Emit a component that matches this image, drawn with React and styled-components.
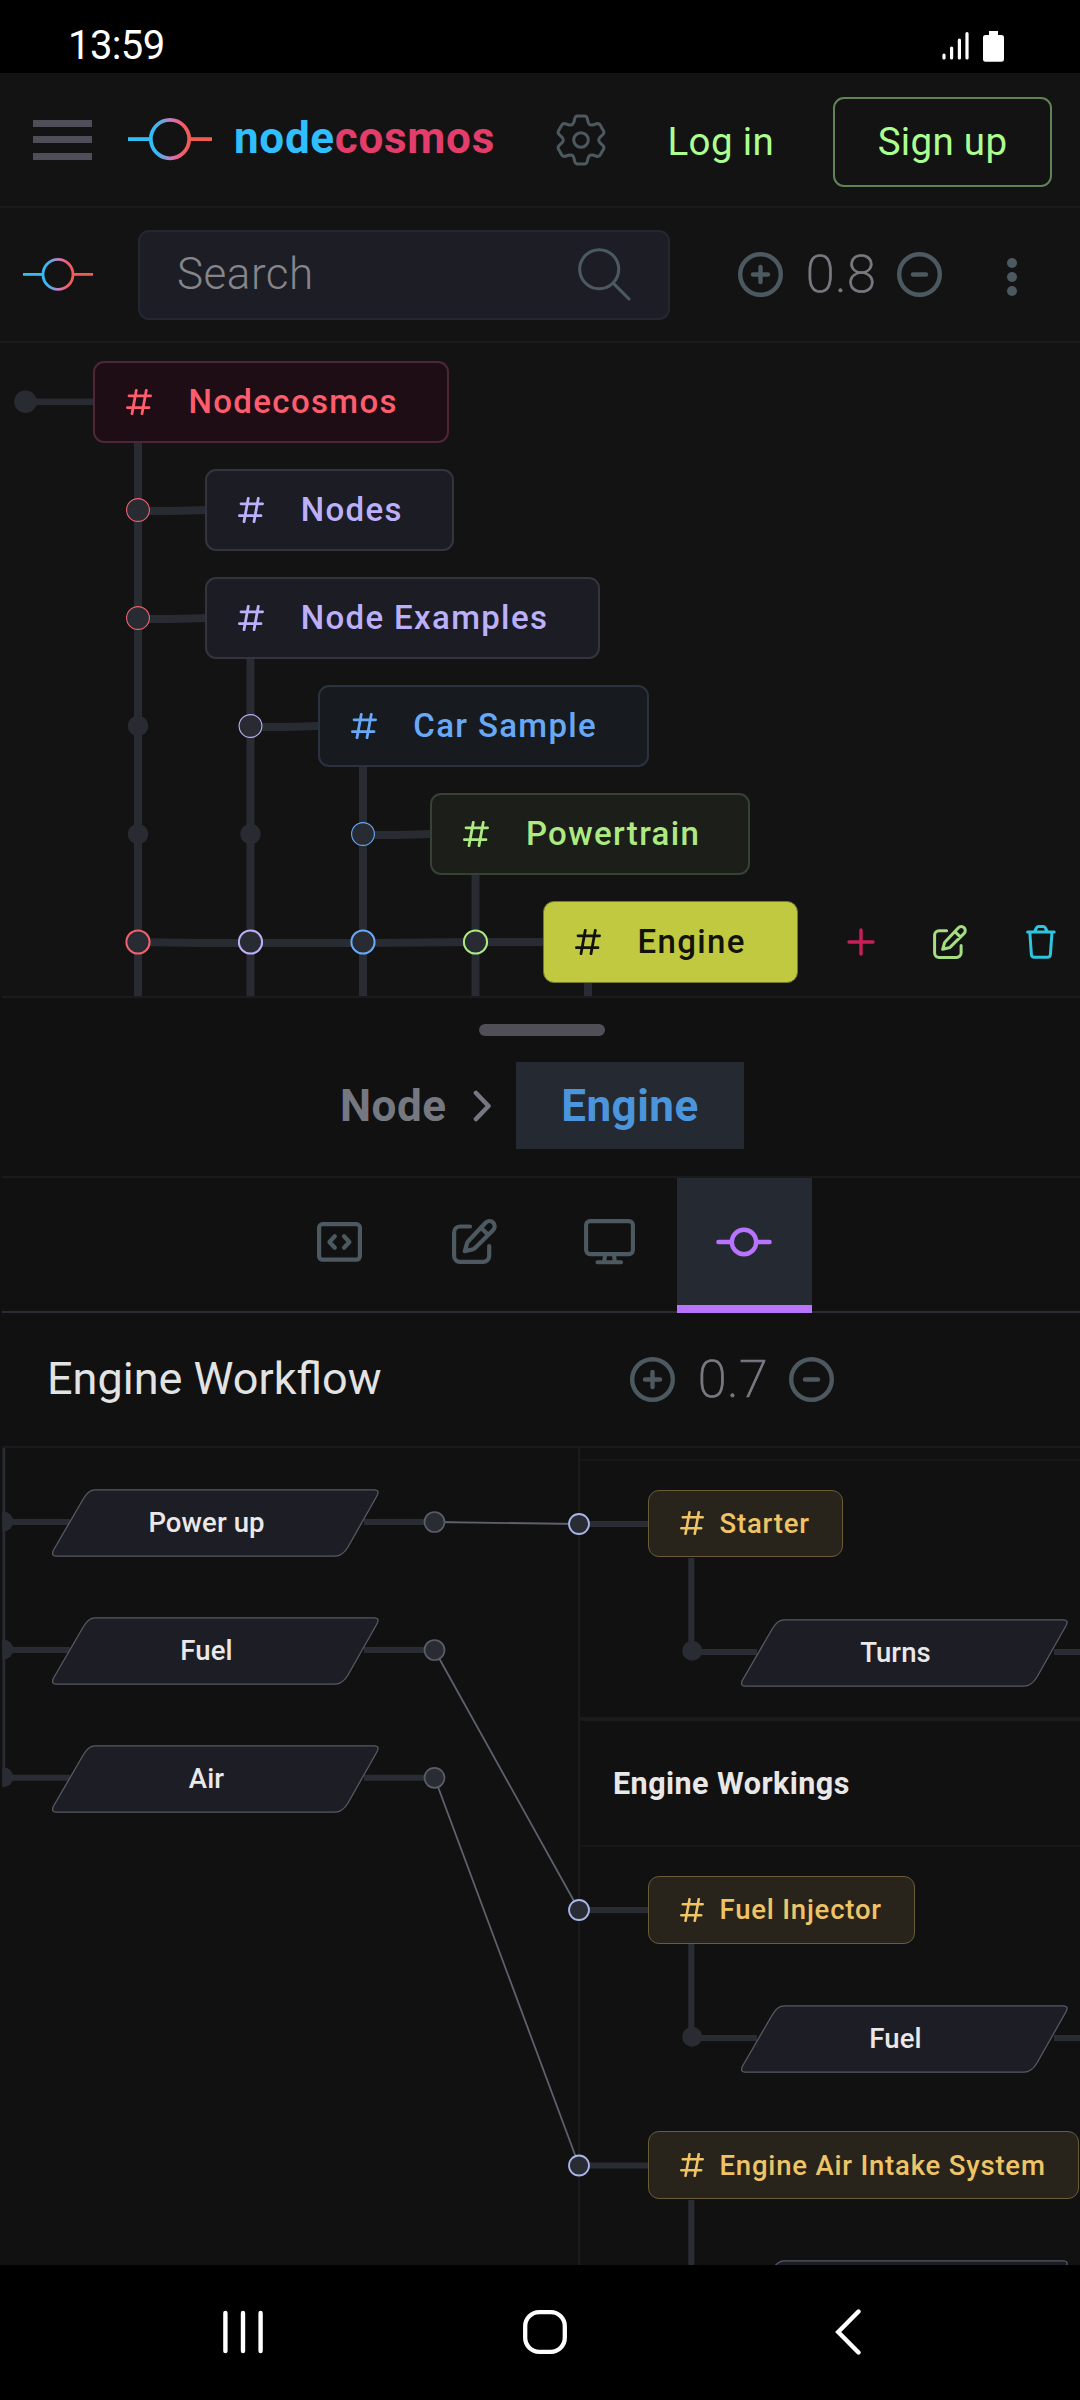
import React from "react";
import styled, { createGlobalStyle } from "styled-components";

const GlobalStyle = createGlobalStyle`
  * { box-sizing: border-box; }
  body { margin: 0; background: #000; }
`;

const line = "#1b1b1c";
const link = "#282b31";
const muted = "#4d5960";

const Screen = styled.div`
  width: 1080px;
  height: 2400px;
  display: flex;
  flex-direction: column;
  overflow: hidden;
  background: #131313;
  font-family: Roboto, "Liberation Sans", sans-serif;
  svg { display: block; flex: none; }
`;

const StatusBar = styled.div`
  height: 73px;
  flex: none;
  padding: 19px 76px 0 68px;
  display: flex;
  justify-content: space-between;
  background: #000;
`;

const Clock = styled.div`
  color: #fff;
  font-size: 40px;
  line-height: 53px;
  letter-spacing: -0.6px;
`;

const StatusIcons = styled.div`
  display: flex;
  gap: 14px;
  padding-top: 12px;
`;

const Header = styled.header`
  height: 135px;
  flex: none;
  display: flex;
  align-items: center;
  padding: 0 28px 0 33px;
  border-bottom: 2px solid ${line};
  > * { flex: none; }
`;

const MenuButton = styled.div`
  width: 59px;
  height: 40px;
  margin-right: 36px;
  display: flex;
  flex-direction: column;
  justify-content: space-between;
`;

const MenuBar = styled.span`
  height: 7px;
  background: #4f4e58;
`;

const Brand = styled.div`
  width: 321px;
  margin-left: 22px;
  padding-bottom: 4px;
  color: #2fbfff;
  font-size: 44px;
  font-weight: 700;
  line-height: 52px;
  letter-spacing: 0.7px;
  span { color: #e23d6b; }
`;

const LoginLink = styled.div`
  margin: 3px 0 0 59px;
  width: 167px;
  padding-left: 1.5px;
  color: #abff91;
  font-size: 38.5px;
  letter-spacing: 0.35px;
`;

const SignUp = styled.div`
  margin-top: 5px;
  width: 219px;
  height: 90px;
  padding-bottom: 2px;
  display: flex;
  align-items: center;
  justify-content: center;
  border: 2px solid #5f8355;
  border-radius: 11px;
  color: #abff91;
  font-size: 38.5px;
  letter-spacing: 0.3px;
`;

const Toolbar = styled.div`
  height: 135px;
  flex: none;
  display: flex;
  align-items: center;
  padding-left: 23px;
  border-bottom: 2px solid ${line};
`;

const SearchBox = styled.div`
  width: 532px;
  height: 90px;
  margin: 0 68px 0 45px;
  padding: 0 37px 0 37px;
  display: flex;
  align-items: center;
  justify-content: space-between;
  background: #1d1d25;
  border: 2px solid #24272f;
  border-radius: 11px;
`;

const Placeholder = styled.span`
  color: #85858a;
  font-size: 44px;
  font-weight: 300;
  line-height: 52px;
  letter-spacing: 0.5px;
  padding-bottom: 2px;
`;

const Zoom = styled.div`
  display: flex;
  align-items: center;
`;

const ZoomValue = styled.span`
  width: 114px;
  padding-left: 2px;
  text-align: center;
  color: #797a82;
  font-size: 52.25px;
  font-weight: 200;
  -webkit-text-stroke: 0.7px #797a82;
  line-height: 60px;
  letter-spacing: 0.4px;
`;

const More = styled.div`
  margin-left: 65px;
  padding-top: 4px;
  display: flex;
  flex-direction: column;
  gap: 4px;
  i { width: 10px; height: 10px; border-radius: 50%; background: ${muted}; }
`;

const Tree = styled.div`
  position: relative;
  height: 653px;
  flex: none;
  padding: 18px 0 0 93px;
  display: flex;
  flex-direction: column;
  gap: 26px;
  overflow: hidden;
`;

const Links = styled.svg`
  position: absolute;
  left: 0;
  top: 0;
`;

const TreeRow = styled.div`
  position: relative;
  display: flex;
  align-items: center;
  margin-left: ${(p) => Math.max(0, p.$depth * 112.6 - 0.4)}px;
`;

const tones = {
  red: ["#ff5d6e", "#1f0d15", "#4d2638"],
  violet: ["#bdb0fb", "#1c1c24", "#34343f"],
  blue: ["#68a9f7", "#171b1f", "#2a3240"],
  green: ["#aeea82", "#1b1e19", "#354334"],
  lime: ["#11120a", "#c1c940", "#75782d"],
};

const TreeNode = styled.div`
  width: ${(p) => p.$width}px;
  height: 82px;
  padding: 0 0 1px 31px;
  display: flex;
  align-items: center;
  gap: 36.5px;
  color: ${(p) => tones[p.$tone][0]};
  background: ${(p) => tones[p.$tone][1]};
  border: ${(p) => (p.$tone === "lime" ? 1.5 : 2)}px solid ${(p) => tones[p.$tone][2]};
  border-radius: 11px;
  font-size: 33px;
  font-weight: 500;
  letter-spacing: 1.35px;
  white-space: nowrap;
`;

const NodeActions = styled.div`
  display: flex;
  align-items: center;
  margin-left: 49px;
  gap: 58.5px;
`;

const Panel = styled.section`
  height: 1269px;
  flex: none;
  display: flex;
  flex-direction: column;
  background: #111;
`;

const Crumbs = styled.div`
  height: 182px;
  flex: none;
  margin-left: 2px;
  padding: 26px 0 0 2px;
  display: flex;
  flex-direction: column;
  align-items: center;
  gap: 26px;
  border-top: 2px solid ${line};
  border-bottom: 2px solid ${line};
`;

const Handle = styled.div`
  width: 126px;
  height: 12px;
  border-radius: 6px;
  background: #504e57;
`;

const CrumbRow = styled.div`
  display: flex;
  align-items: center;
  color: #767881;
  font-size: 44px;
  font-weight: 700;
  letter-spacing: 0.5px;
  svg { margin: 0 23.5px 0 26px; }
`;

const CrumbActive = styled.div`
  width: 228px;
  height: 87px;
  display: flex;
  align-items: center;
  justify-content: center;
  background: #252932;
  color: #4a95dc;
`;

const Tabs = styled.div`
  height: 135px;
  flex: none;
  margin-left: 2px;
  padding-left: 270px;
  display: flex;
  background: linear-gradient(#2a2b33, #2a2b33) bottom / 100% 2px no-repeat;
`;

const Tab = styled.div`
  width: 135px;
  height: 135px;
  display: flex;
  align-items: center;
  justify-content: center;
  padding: ${(p) => (p.$active ? "1px 1px 0 0" : "0 0 8px")};
  background: ${(p) => (p.$active ? "#252932" : "transparent")};
  border-bottom: ${(p) => (p.$active ? "8px solid #b874ff" : "none")};
`;

const WorkflowBar = styled.div`
  height: 135px;
  flex: none;
  margin-left: 2px;
  padding-left: 45px;
  display: flex;
  align-items: center;
  border-bottom: 2px solid ${line};
`;

const WorkflowTitle = styled.h1`
  margin: 0;
  width: 583px;
  padding-bottom: 2px;
  color: #e3e3e3;
  font-size: 45px;
  font-weight: 400;
  font-variant-ligatures: common-ligatures;
`;

const Canvas = styled.div`
  position: relative;
  height: 817px;
  flex: none;
  display: flex;
  overflow: hidden;
`;

const Inputs = styled.div`
  width: 578px;
  flex: none;
`;

const Steps = styled.div`
  flex: 1;
  display: flex;
  flex-direction: column;
  border-left: 2px solid ${line};
`;

const StepPrevious = styled.div`
  height: 273px;
  flex: none;
  padding-top: 11px;
  border-bottom: 4px solid ${line};
  &::before { content: ""; display: block; height: 2px; background: #171718; }
`;

const StepHeader = styled.h2`
  height: 126px;
  flex: none;
  margin: 0;
  padding: 0 0 0 33px;
  display: flex;
  align-items: center;
  border-bottom: 2px solid #171718;
  color: #eae7e7;
  font-size: 30.5px;
  font-weight: 700;
  letter-spacing: 0.45px;
`;

const FlowNode = styled.div`
  position: absolute;
  left: 648px;
  top: ${(p) => p.$y}px;
  width: ${(p) => p.$width}px;
  height: 67.5px;
  padding-left: 31px;
  display: flex;
  align-items: center;
  gap: 15.5px;
  color: #efc467;
  background: #28241b;
  border: 1.5px solid #6b5c37;
  border-radius: 11px;
  font-size: 27.5px;
  font-weight: 500;
  letter-spacing: 0.8px;
  white-space: nowrap;
`;

const IoNode = styled.div`
  position: absolute;
  left: ${(p) => p.$x}px;
  top: ${(p) => p.$y}px;
  width: 328px;
  height: 68px;
  svg { position: absolute; left: 0; top: 0; }
  span {
    position: relative;
    display: block;
    width: 309px;
    text-align: center;
    line-height: 67px;
    color: #ebe8e8;
    font-size: 27.5px;
    font-weight: 500;
    letter-spacing: 0.1px;
  }
`;

const NavBar = styled.nav`
  height: 135px;
  flex: none;
  display: flex;
  align-items: center;
  padding: 0 0 2px 223px;
  background: #000;
`;

const NavSlot = styled.div`
  width: ${(p) => p.$width}px;
`;

const Logo = ({ width, r, stroke, id }) => {
  const c = width / 2;
  const h = r * 2 + stroke + 2;
  return (
    <svg width={width} height={h} viewBox={`0 0 ${width} ${h}`} fill="none" stroke={`url(#${id})`} strokeWidth={stroke}>
      <defs>
        <linearGradient id={id} gradientUnits="userSpaceOnUse" x1={c - r} x2={c + r} y1="0" y2="0">
          <stop offset="0" stopColor="#33bdf5" />
          <stop offset="0.2" stopColor="#45b4ee" />
          <stop offset="0.55" stopColor="#d277b8" />
          <stop offset="0.75" stopColor="#f0607c" />
          <stop offset="1" stopColor="#f25b52" />
        </linearGradient>
      </defs>
      <circle cx={c} cy={h / 2} r={r} />
      <path d={`M0 ${h / 2}H${c - r}`} stroke="#33bdf5" />
      <path d={`M${c + r} ${h / 2}H${width}`} stroke="#f25b52" />
    </svg>
  );
};

const gearTooth = [
  ["L", -7.2, -17.6], ["L", -6.2, -21.7], ["Q", -5.5, -24.1, -3.4, -24.1], ["L", 3.4, -24.1],
  ["Q", 5.5, -24.1, 6.2, -21.7], ["L", 7.2, -17.6], ["Q", 7.8, -15.8, 9, -15.2],
];
const gearPath = "M-9 -15.2" + [0, 60, 120, 180, 240, 300].map((a) => {
  const t = (a * Math.PI) / 180;
  return gearTooth.map(([cmd, ...n]) => {
    const out = [];
    for (let i = 0; i < n.length; i += 2) {
      out.push((n[i] * Math.cos(t) - n[i + 1] * Math.sin(t)).toFixed(2));
      out.push((n[i] * Math.sin(t) + n[i + 1] * Math.cos(t)).toFixed(2));
    }
    return cmd + out.join(" ");
  }).join("");
}).join("") + "Z";

const Gear = () => (
  <svg width="52" height="52" viewBox="-26 -26 52 52" fill="none" stroke={muted} strokeWidth="3" strokeLinejoin="round">
    <path d={gearPath} />
    <circle r="7.3" />
  </svg>
);

const SearchIcon = () => (
  <svg width="53" height="53" viewBox="0 0 53 53" fill="none" stroke={muted} strokeWidth="3.1" strokeLinecap="round">
    <circle cx="21.2" cy="21.2" r="19.5" />
    <path d="M35.2 35.2L51 51" />
  </svg>
);

const ZoomIcon = ({ plus }) => (
  <svg width="45" height="45" viewBox="0 0 45 45" fill="none" stroke={muted} strokeWidth="4.4" strokeLinecap="round">
    <circle cx="22.5" cy="22.5" r="20.3" />
    {plus ? <path d="M15 22.5H30M22.5 15V30" /> : <path d="M16 22.5H29" />}
  </svg>
);

const Hash = ({ size = 26 }) => (
  <svg width={size} height={size} viewBox="0 0 26 26" fill="none" stroke="currentColor" strokeWidth="2.8" strokeLinecap="round">
    <path d="M10.3 1.3L6 24.7M20.3 1.3L16 24.7M3 6.8H24.6M1.4 18.7H23" />
  </svg>
);

const Pencil = ({ size, color, stroke = 4.2 }) => (
  <svg width={size} height={size} viewBox="0 0 45 45" fill="none" stroke={color} strokeWidth={stroke} strokeLinecap="round" strokeLinejoin="round">
    <path d="M18 7.5H8A6 6 0 0 0 2.1 13.5V37A6 6 0 0 0 8 42.9H31A6 6 0 0 0 37.2 37V27" />
    <path d="M12.8 32.2L15.2 23.8Q15.5 22.9 16.2 22.2L33.6 3.7A5 5 0 0 1 41.2 11L22.8 29.2Q22 29.9 21 30.2ZM29 8.8L36.1 15.8" />
  </svg>
);

const Plus = () => (
  <svg width="28" height="28" viewBox="0 0 28 28" stroke="#c81f5b" strokeWidth="3.4" strokeLinecap="round">
    <path d="M2 14H26M14 2V26" />
  </svg>
);

const Trash = () => (
  <svg width="30" height="34" viewBox="0 0 30 34" fill="none" stroke="#2ec5de" strokeWidth="3" strokeLinecap="round" strokeLinejoin="round">
    <path d="M1.6 7H28.2M8.6 6.5L10.4 3Q11.2 1.6 12.6 1.6H17.2Q18.6 1.6 19.4 3L21.2 6.5M3.8 7L5.4 29.6Q5.7 32.3 8.4 32.3H21.4Q24.1 32.3 24.4 29.6L26 7" />
  </svg>
);

const CodeIcon = () => (
  <svg width="45" height="40" viewBox="0 0 45 40" fill="none" stroke={muted} strokeWidth="4.2" strokeLinecap="round" strokeLinejoin="round">
    <rect x="2.1" y="2.1" width="40.8" height="35.6" rx="3.5" />
    <path d="M17.8 14.2L12.4 20L17.8 25.7M27 14.2L32.4 20L27 25.7" />
  </svg>
);

const DisplayIcon = () => (
  <svg width="51" height="46" viewBox="0 0 51 46" fill="none" stroke={muted} strokeWidth="4.1" strokeLinecap="round" strokeLinejoin="round">
    <rect x="2.1" y="2.1" width="46.8" height="33" rx="4" />
    <path d="M21 36.5L20.2 42.5M30 36.5L30.8 42.5M13.5 43.2H37" />
  </svg>
);

const CommitIcon = () => (
  <svg width="56" height="30" viewBox="0 0 56 30" fill="none" stroke="#b874ff" strokeWidth="4.4" strokeLinecap="round">
    <circle cx="28" cy="15" r="12.2" />
    <path d="M2.4 15H15M41 15H53.6" />
  </svg>
);

const columns = [138, 250.5, 363, 475.5, 588];
const columnTops = [100, 316, 424, 532, 640];
const ringColors = ["#f45f70", "#bdb0fb", "#68a9f7", "#aeea82"];

const TreeLinks = () => (
  <Links width="1080" height="653" viewBox="0 0 1080 653" fill="none">
    <g stroke={link} strokeWidth="8">
      {columns.map((x, i) => <path key={x} d={`M${x} ${columnTops[i]}V653`} />)}
      <path d="M30 58.8H93" strokeWidth="6.6" />
      {[[0, 167], [0, 275], [1, 383], [2, 491]].map(([c, y]) => (
        <path key={`${c}-${y}`} d={`M${columns[c]} ${y + 1}H${columns[c] + 35}L${columns[c] + 68} ${y}`} />
      ))}
      <path d="M138 599L200 600H370L475 599H545" />
    </g>
    <circle cx="25.5" cy="58.8" r="11.3" fill={link} />
    {[[138, 383], [138, 491], [250.5, 491]].map(([x, y]) => (
      <circle key={`${x}-${y}`} cx={x} cy={y} r="10.3" fill={link} />
    ))}
    {[[0, 167], [0, 275], [1, 383], [2, 491]].map(([c, y]) => (
      <circle key={`${c}-${y}`} cx={columns[c]} cy={y} r="11.4" fill={link} stroke={ringColors[c]} strokeWidth="1.1" />
    ))}
    {ringColors.map((color, i) => (
      <circle key={color} cx={columns[i]} cy="599" r="11.6" fill={link} stroke={color} strokeWidth="2" />
    ))}
  </Links>
);

const nodes = [
  ["Nodecosmos", 0, "red", 356],
  ["Nodes", 1, "violet", 249],
  ["Node Examples", 1, "violet", 394.5],
  ["Car Sample", 2, "blue", 331],
  ["Powertrain", 3, "green", 320],
];

const flowLink = "#292d33";

const FlowLinks = () => (
  <Links width="1080" height="817" viewBox="0 0 1080 817" fill="none">
    <defs>
      <clipPath id="edge"><rect x="2.3" y="0" width="1078" height="817" /></clipPath>
    </defs>
    <g stroke="#5d616d" strokeWidth="1.8">
      <path d="M434.5 74L579 76M434.5 202L579 462M434.5 329.5L579 717.5" />
    </g>
    <g stroke={flowLink} strokeWidth="6" clipPath="url(#edge)">
      <path d="M3.7 0V337" strokeWidth="3" />
      {[74, 202, 329.8].map((y) => (
        <g key={y}>
          <path d={`M3 ${y}H70M364 ${y}H430`} />
          <circle cx="3.3" cy={y - 0.5} r="10" fill={flowLink} stroke="none" />
        </g>
      ))}
      {[76, 462, 717.5].map((y) => <path key={y} d={`M579 ${y}H649`} />)}
      {[76, 462].map((y) => (
        <g key={y}>
          <path d={`M691.3 ${y + 34}V${y + 127}M692 ${y + 128}H757M1054 ${y + 128}H1080`} />
          <circle cx="692.2" cy={y + 126.7} r="10" fill={flowLink} stroke="none" />
        </g>
      ))}
      <path d="M691.3 752V817" />
    </g>
    {[74, 202, 329.8].map((y) => (
      <circle key={y} cx="434.5" cy={y} r="10" fill={flowLink} stroke="#5a5e69" strokeWidth="1.7" />
    ))}
    {[76, 462, 717.5].map((y) => (
      <circle key={y} cx="579" cy={y} r="10" fill={flowLink} stroke="#aab6ea" strokeWidth="1.8" />
    ))}
  </Links>
);

const IO = ({ x, y, label }) => (
  <IoNode $x={x} $y={y}>
    <svg width="328" height="68" viewBox="0 0 328 68" fill="#1d1d25" stroke="#575a64" strokeWidth="1.3">
      <path d="M43 0.8H322.5Q327.6 0.8 325.4 6L296 58Q290.5 67.2 283 67.2H4Q-1 67.2 1.3 61.5L31.5 9.5Q36.5 0.8 43 0.8Z" />
    </svg>
    <span>{label}</span>
  </IoNode>
);

export default function App() {
  return (
    <Screen>
      <GlobalStyle />
      <StatusBar>
        <Clock>13:59</Clock>
        <StatusIcons>
          <svg width="27" height="31" viewBox="0 0 27 31" stroke="#fff" strokeWidth="3.2" strokeLinecap="round">
            <path d="M2 24V27M9.6 17V27M17.4 9V27M25 2.5V27" />
          </svg>
          <svg width="21" height="31" viewBox="0 0 21 31" fill="#fff">
            <path d="M6 0H15V4H18.5Q21 4 21 6.5V28Q21 30.7 18.5 30.7H2.5Q0 30.7 0 28V6.5Q0 4 2.5 4H6Z" />
          </svg>
        </StatusIcons>
      </StatusBar>

      <Header>
        <MenuButton><MenuBar /><MenuBar /><MenuBar /></MenuButton>
        <Logo id="brand" width={84} r={19.2} stroke={3.8} />
        <Brand>node<span>cosmos</span></Brand>
        <Gear />
        <LoginLink>Log in</LoginLink>
        <SignUp>Sign up</SignUp>
      </Header>

      <Toolbar>
        <Logo id="tree" width={70} r={15} stroke={2.8} />
        <SearchBox>
          <Placeholder>Search</Placeholder>
          <SearchIcon />
        </SearchBox>
        <Zoom>
          <ZoomIcon plus />
          <ZoomValue>0.8</ZoomValue>
          <ZoomIcon />
        </Zoom>
        <More><i /><i /><i /></More>
      </Toolbar>

      <Tree>
        <TreeLinks />
        {nodes.map(([label, depth, tone, width]) => (
          <TreeRow key={label} $depth={depth}>
            <TreeNode $tone={tone} $width={width}><Hash />{label}</TreeNode>
          </TreeRow>
        ))}
        <TreeRow $depth={4}>
          <TreeNode $tone="lime" $width={254.5}><Hash />Engine</TreeNode>
          <NodeActions>
            <Plus />
            <Pencil size={34} color="#a5dd82" stroke={4} />
            <Trash />
          </NodeActions>
        </TreeRow>
      </Tree>

      <Panel>
        <Crumbs>
          <Handle />
          <CrumbRow>
            Node
            <svg width="20" height="32" viewBox="0 0 20 32" fill="none" stroke="#767881" strokeWidth="4.6" strokeLinecap="round" strokeLinejoin="round">
              <path d="M4 3L16.5 16L4 29" />
            </svg>
            <CrumbActive>Engine</CrumbActive>
          </CrumbRow>
        </Crumbs>
        <Tabs>
          <Tab><CodeIcon /></Tab>
          <Tab><Pencil size={45} color={muted} /></Tab>
          <Tab><DisplayIcon /></Tab>
          <Tab $active><CommitIcon /></Tab>
        </Tabs>
        <WorkflowBar>
          <WorkflowTitle>Engine Workflow</WorkflowTitle>
          <Zoom>
            <ZoomIcon plus />
            <ZoomValue>0.7</ZoomValue>
            <ZoomIcon />
          </Zoom>
        </WorkflowBar>
        <Canvas>
          <Inputs />
          <Steps>
            <StepPrevious />
            <StepHeader>Engine Workings</StepHeader>
          </Steps>
          <FlowLinks />
          <IO x={52} y={41.3} label="Power up" />
          <IO x={52} y={169.3} label="Fuel" />
          <IO x={52} y={297} label="Air" />
          <FlowNode $y={41.5} $width={195}><Hash size={24} />Starter</FlowNode>
          <IO x={741} y={170.7} label="Turns" />
          <FlowNode $y={428} $width={267}><Hash size={24} />Fuel Injector</FlowNode>
          <IO x={741} y={556.7} label="Fuel" />
          <FlowNode $y={683.3} $width={430.5}><Hash size={24} />Engine Air Intake System</FlowNode>
          <IO x={741} y={811.7} label="" />
        </Canvas>
      </Panel>

      <NavBar>
        <NavSlot $width={300}>
          <svg width="40" height="44" viewBox="0 0 40 44" stroke="#fff" strokeWidth="4.4" strokeLinecap="round">
            <path d="M2.4 3V41M20 3V41M37.6 3V41" />
          </svg>
        </NavSlot>
        <NavSlot $width={312}>
          <svg width="44" height="44" viewBox="0 0 44 44" fill="none" stroke="#fff" strokeWidth="4.3">
            <rect x="2.2" y="2.2" width="39.6" height="39.6" rx="14" />
          </svg>
        </NavSlot>
        <NavSlot $width={26}>
          <svg width="26" height="46" viewBox="0 0 26 46" fill="none" stroke="#fff" strokeWidth="4.4" strokeLinecap="round">
            <path d="M23.5 2.5L3.2 23L23.5 43.5" />
          </svg>
        </NavSlot>
      </NavBar>
    </Screen>
  );
}
